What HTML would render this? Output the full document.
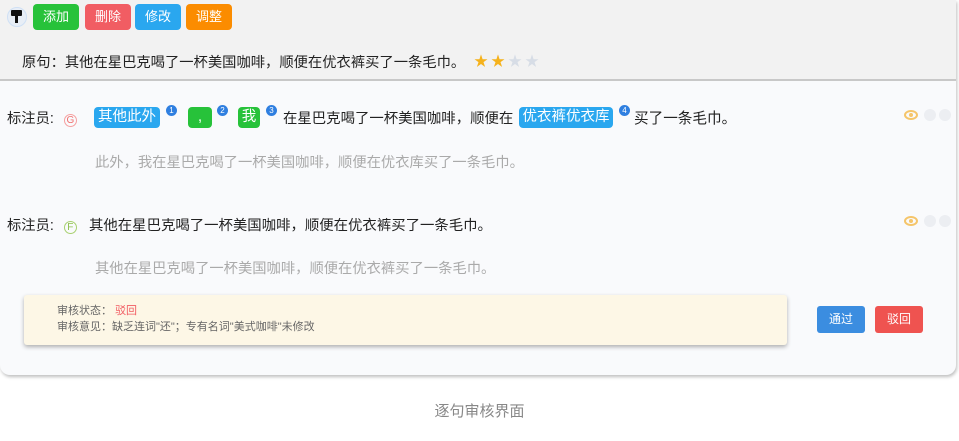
<!DOCTYPE html>
<html><head><meta charset="utf-8"><style>
*{margin:0;padding:0;box-sizing:border-box}
body{width:959px;height:441px;background:#fff;font-family:"Liberation Sans","Noto Sans CJK SC",sans-serif;position:relative;overflow:hidden;color:#333}
.card{position:absolute;left:0;top:0;width:956px;height:375px;background:#f9fafc;border-radius:0 0 10px 10px;box-shadow:1px 2px 3px rgba(0,0,0,.25);overflow:hidden}
.head{position:absolute;left:0;top:0;width:956px;height:81px;background:#f2f2f2;border-bottom:2px solid #c8c8c8}
.btn{position:absolute;top:4px;height:26px;border-radius:4px;color:#fff;font-size:13px;line-height:26px;text-align:center;width:46px}
.abs{position:absolute;white-space:nowrap}
.tag{position:absolute;top:107px;color:#fff;border-radius:4px;height:21px;line-height:21px;font-size:14.5px;text-align:center}
.num{position:absolute;top:105px;width:11px;height:11px;border-radius:50%;background:#2f7fe0;color:#fff;font-size:8px;line-height:11px;text-align:center}
.t{font-size:14.3px;color:#222}
.g{font-size:14.3px;color:#aaa}
.eye{position:absolute;width:14px;height:10px;border:2px solid #f5c56a;border-radius:50%}
.eye:after{content:"";position:absolute;left:3px;top:1px;width:4px;height:4px;border-radius:50%;background:#f5c56a}
.dot{position:absolute;width:12px;height:12px;border-radius:50%;background:#eceef2}
</style></head><body>
<div class="card">
<div class="head">
 <div class="abs" style="left:7px;top:7px;width:20px;height:20px;border-radius:50%;background:#e8eef6;border:1px solid #cfe0f5"></div>
 <div class="abs" style="left:11px;top:10px;width:11px;height:6px;background:#111;border-radius:1px"></div>
 <div class="abs" style="left:15px;top:16px;width:3px;height:7px;background:#111"></div>
 <div class="btn" style="left:33px;background:#27c23a">添加</div>
 <div class="btn" style="left:85px;background:#f15d63">删除</div>
 <div class="btn" style="left:135px;background:#2aa7ef">修改</div>
 <div class="btn" style="left:186px;background:#fb8c00">调整</div>
 <div class="abs t" style="left:22px;top:51px">原句：其他在星巴克喝了一杯美国咖啡，顺便在优衣裤买了一条毛巾。</div>
 <div class="abs" style="left:474px;top:51px;font-size:14px;color:#f5b21c;letter-spacing:3px">★★<span style="color:#d7dde6">★★</span></div>
</div>
<div class="abs t" style="left:7px;top:107px">标注员: <span style="color:#f07070;border:1px solid #f5a0a0;border-radius:50%;display:inline-block;width:13px;height:13px;line-height:12px;text-align:center;font-size:10px;margin-left:6px">G</span></div>
<div class="tag" style="left:94px;width:66px;background:#2aa7ef">其他此外</div><div class="num" style="left:166px">1</div>
<div class="tag" style="left:188px;width:24px;background:#27c23a">,</div><div class="num" style="left:217px">2</div>
<div class="tag" style="left:238px;width:22px;background:#27c23a">我</div><div class="num" style="left:266px">3</div>
<div class="abs t" style="left:283px;top:107px;font-size:14.4px">在星巴克喝了一杯美国咖啡，顺便在</div>
<div class="tag" style="left:519px;width:94px;background:#2aa7ef">优衣裤优衣库</div><div class="num" style="left:619px">4</div>
<div class="abs t" style="left:634px;top:107px;font-size:14.6px">买了一条毛巾。</div>
<div class="abs g" style="left:95px;top:151px">此外，我在星巴克喝了一杯美国咖啡，顺便在优衣库买了一条毛巾。</div>
<div class="eye" style="left:904px;top:110px"></div><div class="dot" style="left:924px;top:109px"></div><div class="dot" style="left:939px;top:109px"></div>
<div class="abs t" style="left:7px;top:214px">标注员: <span style="color:#8cc04b;border:1px solid #a8d070;border-radius:50%;display:inline-block;width:13px;height:13px;line-height:12px;text-align:center;font-size:10px;margin-left:6px">F</span></div>
<div class="abs t" style="left:89px;top:214px;font-size:14.4px">其他在星巴克喝了一杯美国咖啡，顺便在优衣裤买了一条毛巾。</div>
<div class="abs g" style="left:95px;top:257px">其他在星巴克喝了一杯美国咖啡，顺便在优衣裤买了一条毛巾。</div>
<div class="eye" style="left:904px;top:216px"></div><div class="dot" style="left:924px;top:215px"></div><div class="dot" style="left:939px;top:215px"></div>
<div class="abs" style="left:24px;top:295px;width:763px;height:50px;background:#fdf7e6;border-radius:3px;box-shadow:0 2px 4px rgba(0,0,0,.3)"></div>
<div class="abs" style="left:57px;top:303px;font-size:11px;color:#666;line-height:16px">审核状态： <span style="color:#f15d63">驳回</span><br>审核意见：缺乏连词"还"；专有名词"美式咖啡"未修改</div>
<div class="abs" style="left:817px;top:306px;width:48px;height:27px;background:#3b8de0;border-radius:3px;color:#fff;font-size:12px;line-height:27px;text-align:center">通过</div>
<div class="abs" style="left:875px;top:306px;width:48px;height:27px;background:#ef5350;border-radius:3px;color:#fff;font-size:12px;line-height:27px;text-align:center">驳回</div>
</div>
<div class="abs" style="left:0;width:959px;top:400px;text-align:center;font-size:15px;color:#888">逐句审核界面</div>
</body></html>
